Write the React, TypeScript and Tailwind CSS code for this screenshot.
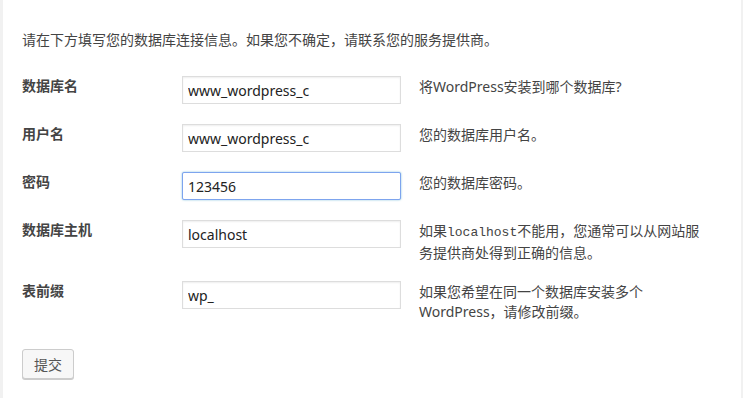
import React from "react";

const cjk = '"Noto Sans", "Noto Sans CJK SC", sans-serif';

function Row({
  label,
  value,
  focused,
  children,
}: {
  label: string;
  value: string;
  focused?: boolean;
  children: React.ReactNode;
}) {
  return (
    <div className="flex items-start">
      <div className="w-[160px] pt-[10px] text-[14px] leading-[20px] font-bold text-[#444]">{label}</div>
      <div className="py-[10px]">
        <input
          readOnly
          value={value}
          className={
            "block w-[219px] h-[28px] px-[5px] text-[14px] text-[#222] bg-white outline-none " +
            (focused
              ? "border border-[#7da4ee] rounded-[2px] shadow-[0_0_2px_rgba(30,140,190,0.6)]"
              : "border border-[#dddddd] shadow-[inset_0_1px_2px_rgba(0,0,0,0.07)]")
          }
          style={{ fontFamily: cjk }}
        />
      </div>
      <div className="ml-[18px] w-[290px] pt-[11px] pb-[8px] text-[14px] leading-[20px] text-[#444]">{children}</div>
    </div>
  );
}

export default function App() {
  return (
    <div className="w-[743px] h-[398px] bg-[#f1f1f1] overflow-hidden" style={{ fontFamily: cjk }}>
      <div className="ml-[3px] w-[738px] h-[398px] bg-white pl-[19px] pt-[30px]">
        <p className="text-[14px] leading-[20px] text-[#444]">
          请在下方填写您的数据库连接信息。如果您不确定，请联系您的服务提供商。
        </p>
        <div className="mt-[16px]">
          <Row label="数据库名" value="www_wordpress_c">
            将WordPress安装到哪个数据库?
          </Row>
          <Row label="用户名" value="www_wordpress_c">
            您的数据库用户名。
          </Row>
          <Row label="密码" value="123456" focused>
            您的数据库密码。
          </Row>
          <Row label="数据库主机" value="localhost">
            如果
            <code className="text-[13px]" style={{ fontFamily: '"Liberation Mono", monospace' }}>
              localhost
            </code>
            不能用，您通常可以从网站服务提供商处得到正确的信息。
          </Row>
          <Row label="表前缀" value="wp_">
            如果您希望在同一个数据库安装多个WordPress，请修改前缀。
          </Row>
        </div>
        <button className="mt-[19px] h-[30px] px-[11px] text-[14px] text-[#555] bg-[#f7f7f7] border border-[#cccccc] rounded-[3px] shadow-[0_1px_0_#cccccc]">
          提交
        </button>
      </div>
    </div>
  );
}
